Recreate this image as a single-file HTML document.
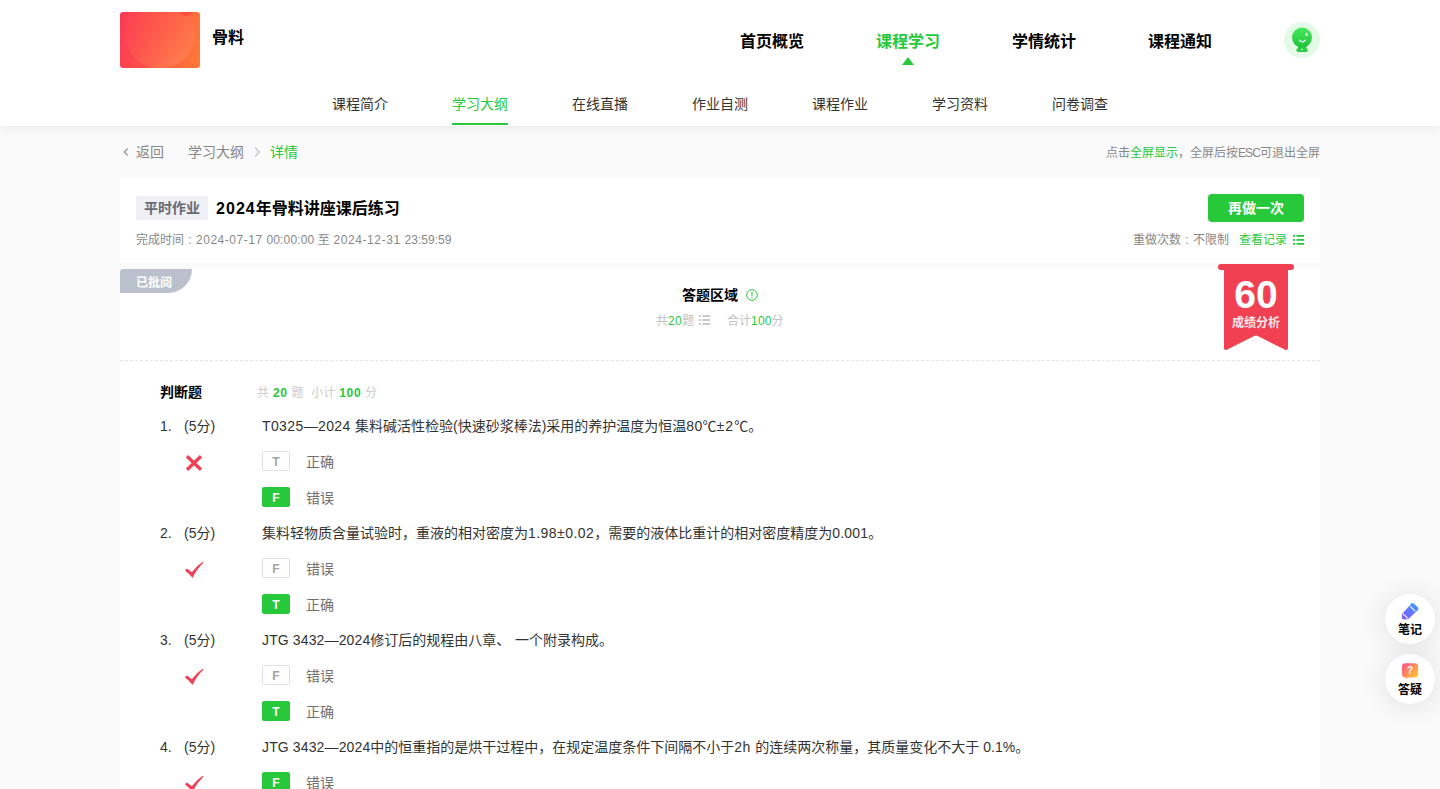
<!DOCTYPE html>
<html lang="zh-CN">
<head>
<meta charset="utf-8">
<title>2024年骨料讲座课后练习</title>
<style>
*{box-sizing:border-box;margin:0;padding:0}
html,body{width:1440px;height:789px;overflow:hidden}
body{background:#fafafa;font-family:"Liberation Sans","Noto Sans CJK SC",sans-serif;color:#333;font-size:14px;position:relative}
.abs{position:absolute;white-space:nowrap}
.l{display:inline-block;white-space:pre;vertical-align:baseline}
.g{color:#27c93b}
#hdr{position:absolute;left:0;top:0;width:1440px;height:126px;background:#fff;box-shadow:0 2px 10px rgba(0,0,0,.07)}
#logo{position:absolute;left:120px;top:12px;width:80px;height:56px;border-radius:3px;overflow:hidden;background:linear-gradient(100deg,#fb3a55 0%,#fd5746 50%,#ff7a35 100%)}
#cname{left:212px;top:26px;font-size:16px;font-weight:bold;color:#000;line-height:24px}
.tn{top:30px;font-size:16px;font-weight:bold;color:#000;line-height:24px;width:64px;text-align:center}
.tn.on{color:#27c93b}
#tri{position:absolute;left:902px;top:57px;width:0;height:0;border-left:6.5px solid transparent;border-right:6.5px solid transparent;border-bottom:8px solid #27c93b}
.sn{top:93px;font-size:14px;color:#333;line-height:22px;width:56px;text-align:center}
.sn.on{color:#27c93b}
#sul{position:absolute;left:452px;top:123px;width:56px;height:2px;background:#27c93b}
.bc{top:141px;font-size:14px;line-height:22px;color:#888}
.bc.g{color:#27c93b}
#c1{position:absolute;left:120px;top:178px;width:1200px;height:85px;background:#fff}
#c2{position:absolute;left:120px;top:269px;width:1200px;height:520px;background:#fff}
#tag{left:136px;top:196px;width:72px;height:24px;background:#eef0f5;border-radius:2px;font-size:14px;font-weight:bold;color:#666a73;text-align:center;line-height:24px}
#ttl{left:216px;top:197px;font-size:16px;font-weight:bold;color:#000;line-height:24px}
#tm{left:136px;top:231px;font-size:12px;color:#888;line-height:18px}
#btn{left:1208px;top:194px;width:96px;height:28px;background:#27c93b;border-radius:4px;color:#fff;font-size:14px;font-weight:bold;text-align:center;line-height:28px}
#redo{top:231px;font-size:12px;color:#888;line-height:18px;right:120px}
#py{position:absolute;left:120px;top:269px;width:72px;height:24px;background:#bbc1cc;border-radius:3px 0 24px 0;color:#fff;font-size:12px;font-weight:bold;line-height:24px;padding:2px 0 0 16px}
#az{left:682px;top:285px;font-size:14px;font-weight:bold;color:#000;line-height:20px}
.sm{font-size:12px;color:#c2c2c2;line-height:18px}
#dash{position:absolute;left:120px;top:360px;width:1200px;height:0;border-top:1px dashed #e4e4e4}
.q{font-size:14px;color:#333;line-height:22px}
.ob{position:absolute;left:262px;width:28px;height:20px;border:1px solid #dde1ea;border-radius:2px;font-size:12px;font-weight:bold;color:#a3a3a8;text-align:center;line-height:20px;background:#fff}
.ob.on{background:#27c93b;border-color:#27c93b;color:#fff}
.ot{left:306px;font-size:14px;color:#707070;line-height:22px}
.fl{position:absolute;left:1385px;width:50px;height:50px;border-radius:50%;background:#fff;box-shadow:0 2px 28px rgba(0,0,0,.11)}
.fl span{position:absolute;left:0;width:50px;text-align:center;top:27.500px;font-size:12px;font-weight:bold;color:#000;line-height:16px}
</style>
</head>
<body>

<div id="hdr">
  <div id="logo"><svg width="80" height="56" viewBox="0 0 80 56"><defs><linearGradient id="lg1" x1="0" y1="0" x2="1" y2="1"><stop offset="0" stop-color="#fc4a55" stop-opacity="0"/><stop offset=".45" stop-color="#fe6550" stop-opacity=".35"/><stop offset="1" stop-color="#ff8a52" stop-opacity=".95"/></linearGradient></defs><circle cx="40" cy="21" r="35.500" fill="url(#lg1)"/><circle cx="66" cy="-3" r="7" fill="#ff4d3a"/></svg></div>
  <div id="cname" class="abs">骨料</div>
  <div class="abs tn" style="left:740px">首页概览</div>
  <div class="abs tn on" style="left:876px">课程学习</div>
  <div class="abs tn" style="left:1012px">学情统计</div>
  <div class="abs tn" style="left:1148px">课程通知</div>
  <div id="tri"></div>
  <svg class="abs" style="left:1284px;top:22px" width="36" height="36" viewBox="0 0 36 36"><defs><linearGradient id="ag" x1="0" y1="0" x2="0" y2="1"><stop offset="0" stop-color="#46ea5e"/><stop offset="1" stop-color="#22c03a"/></linearGradient></defs><circle cx="18" cy="18" r="18" fill="#e3fbe6"/><rect x="12.400" y="26.200" width="11.400" height="3.900" rx="1.800" fill="#2ccc44"/><rect x="14" y="24" width="8.400" height="4" fill="#2ccc44"/><circle cx="18" cy="15.6" r="10" fill="url(#ag)"/><path d="M15.400 18.200 Q18.200 21.500 21.200 18.200" fill="none" stroke="#e8f4ff" stroke-width="1.3" stroke-linecap="round"/><path d="M22.6 10 L23.2 11.8 L24.6 12.4 L23.2 13 L22.6 14.8 L22 13 L20.8 12.4 L22 11.8 Z" fill="#e8ffee"/><circle cx="18" cy="27.4" r=".8" fill="#d8f8dd"/></svg>
  <div class="abs sn" style="left:332px">课程简介</div>
  <div class="abs sn on" style="left:452px">学习大纲</div>
  <div class="abs sn" style="left:572px">在线直播</div>
  <div class="abs sn" style="left:692px">作业自测</div>
  <div class="abs sn" style="left:812px">课程作业</div>
  <div class="abs sn" style="left:932px">学习资料</div>
  <div class="abs sn" style="left:1052px">问卷调查</div>
  <div id="sul"></div>
</div>


<svg class="abs" style="left:122px;top:147px" width="8" height="10" viewBox="0 0 8 10"><path d="M5.600 1.700 L2.400 5 L5.600 8.300" fill="none" stroke="#888" stroke-width="1.2"/></svg>
<div class="abs bc" style="left:136px">返回</div>
<div class="abs bc" style="left:188px">学习大纲</div>
<svg class="abs" style="left:252px;top:146px" width="10" height="12" viewBox="0 0 10 12"><path d="M3 1.5 L7.5 6 L3 10.500" fill="none" stroke="#c0c4cc" stroke-width="1.2"/></svg>
<div class="abs bc g" style="left:270px">详情</div>
<div class="abs" style="right:120px;top:144px;font-size:12px;line-height:18px;color:#888">点击<span class="g">全屏显示</span>，全屏后按<span class="l" style="width:22px;letter-spacing:-0.891px">ESC</span>可退出全屏</div>

<div id="c1"></div>
<div id="tag" class="abs">平时作业</div>
<div id="ttl" class="abs"><span class="l" style="width:39.8px;letter-spacing:1.052px">2024</span>年骨料讲座课后练习</div>
<div id="tm" class="abs">完成时间<span class="l" style="width:12px;text-align:center">:</span><span class="l" style="width:70.5px;letter-spacing:0.526px">2024-07-17 </span><span class="l" style="width:51.2px;letter-spacing:0.128px">00:00:00 </span>至<span class="l" style="width:74.8px;letter-spacing:0.562px"> 2024-12-31 </span><span class="l" style="width:47px;letter-spacing:0.036px">23:59:59</span></div>
<div id="btn" class="abs">再做一次</div>
<div id="redo" class="abs">重做次数<span class="l" style="width:12px;text-align:center">:</span>不限制<span class="g" style="margin-left:10px">查看记录</span><svg width="11" height="10" viewBox="0 0 11 10" style="margin-left:6px;margin-right:16px;vertical-align:-1px"><g fill="#27c93b"><rect x="0" y="0" width="2" height="1.8"/><rect x="3.5" y="0" width="7.5" height="1.8"/><rect x="0" y="4" width="2" height="1.8"/><rect x="3.5" y="4" width="7.5" height="1.8"/><rect x="0" y="8" width="2" height="1.8"/><rect x="3.5" y="8" width="7.5" height="1.8"/></g></svg></div>

<div id="c2"></div>
<div id="py">已批阅</div>
<div id="az" class="abs">答题区域</div>
<svg class="abs" style="left:746px;top:289px" width="12" height="12" viewBox="0 0 12 12"><circle cx="6" cy="6" r="5.300" fill="none" stroke="#27c93b" stroke-width="1"/><rect x="5.5" y="3" width="1" height="4" fill="#27c93b"/><rect x="5.5" y="8" width="1" height="1" fill="#27c93b"/></svg>
<div class="abs sm" style="left:656px;top:312px">共<span class="g"><span class="l" style="width:14.2px;letter-spacing:0.426px">20</span></span>题</div>
<svg class="abs" style="left:698.5px;top:315px" width="11" height="10" viewBox="0 0 11 10"><g fill="#cacaca"><rect x="0" y="0" width="2" height="2"/><rect x="3.5" y="0" width="7.5" height="2"/><rect x="0" y="4" width="2" height="2"/><rect x="3.5" y="4" width="7.5" height="2"/><rect x="0" y="8" width="2" height="2"/><rect x="3.5" y="8" width="7.5" height="2"/></g></svg>
<div class="abs sm" style="left:727px;top:312px">合计<span class="g"><span class="l" style="width:20.6px;letter-spacing:0.193px">100</span></span>分</div>
<div id="dash"></div>

<svg class="abs" style="left:1216px;top:262px" width="80" height="92" viewBox="0 0 80 92"><path d="M5 2 H75 A3 3 0 0 1 75 8 H72 V86 A2 2 0 0 1 69.2 87.800 L41.800 74 A4 4 0 0 0 38.200 74 L10.800 87.800 A2 2 0 0 1 8 86 V8 H5 A3 3 0 0 1 5 2 Z" fill="#f04051"/><text x="40" y="46" text-anchor="middle" font-family="Liberation Sans, sans-serif" font-weight="bold" font-size="39" fill="#fff" textLength="43.5" lengthAdjust="spacingAndGlyphs">60</text><text x="40" y="64.500" text-anchor="middle" font-family="Liberation Sans, Noto Sans CJK SC, sans-serif" font-weight="bold" font-size="12" fill="#ffe9ea">成绩分析</text></svg>

<div class="abs" style="left:160px;top:382px;font-size:14px;font-weight:bold;color:#000;line-height:20px">判断题</div>
<div class="abs sm" style="left:257px;top:384px;color:#ccc;word-spacing:.6px">共 <b class="g"><span class="l" style="width:14.6px;letter-spacing:0.626px">20</span></b> 题&nbsp; 小计 <b class="g"><span class="l" style="width:21.9px;letter-spacing:0.626px">100</span></b> 分</div>

<div class="abs q" style="left:160px;top:415px">1.</div>
<div class="abs q" style="left:184px;top:415px">(5分)</div>
<div class="abs q" style="left:262px;top:415px"><span class="l" style="width:93px;letter-spacing:0.388px">T0325—2024 </span>集料碱活性检验(快速砂浆棒法)采用的养护温度为恒温<span class="l" style="width:16.2px;letter-spacing:0.314px">80</span>℃<span class="l" style="width:17.7px;letter-spacing:1.115px">±2</span>℃。</div>
<svg class="abs" style="left:185px;top:454px" width="18" height="18" viewBox="0 0 18 18"><path d="M2 2.2 L16 15.800 M16 2.200 L2 15.800" stroke="#f04056" stroke-width="3.3" fill="none"/></svg>
<div class="ob" style="top:451px">T</div>
<div class="abs ot" style="top:451px">正确</div>
<div class="ob on" style="top:487px">F</div>
<div class="abs ot" style="top:487px">错误</div>
<div class="abs q" style="left:160px;top:522px">2.</div>
<div class="abs q" style="left:184px;top:522px">(5分)</div>
<div class="abs q" style="left:262px;top:522px">集料轻物质含量试验时，重液的相对密度为<span class="l" style="width:66.3px;letter-spacing:0.458px">1.98±0.02</span>，需要的液体比重计的相对密度精度为<span class="l" style="width:36px;letter-spacing:0.193px">0.001</span>。</div>
<svg class="abs" style="left:185px;top:561px" width="19" height="18" viewBox="0 0 19 18"><path d="M0.3 9.2 Q0.8 7.7 2.3 7.800 L6.800 11.200 Q12 4.500 17.800 0.800 L18.300 1.800 Q11.500 8.500 7.600 16.900 Q4.500 13 0.300 9.800 Z" fill="#f04056"/></svg>
<div class="ob" style="top:558px">F</div>
<div class="abs ot" style="top:558px">错误</div>
<div class="ob on" style="top:594px">T</div>
<div class="abs ot" style="top:594px">正确</div>
<div class="abs q" style="left:160px;top:629px">3.</div>
<div class="abs q" style="left:184px;top:629px">(5分)</div>
<div class="abs q" style="left:262px;top:629px"><span class="l" style="width:108.3px;letter-spacing:0.129px">JTG 3432—2024</span>修订后的规程由八章、<span class="l" style="width:4.7px;letter-spacing:0.810px"> </span>一个附录构成。</div>
<svg class="abs" style="left:185px;top:668px" width="19" height="18" viewBox="0 0 19 18"><path d="M0.3 9.2 Q0.8 7.7 2.3 7.800 L6.800 11.200 Q12 4.500 17.800 0.800 L18.300 1.800 Q11.500 8.500 7.600 16.900 Q4.500 13 0.300 9.800 Z" fill="#f04056"/></svg>
<div class="ob" style="top:665px">F</div>
<div class="abs ot" style="top:665px">错误</div>
<div class="ob on" style="top:701px">T</div>
<div class="abs ot" style="top:701px">正确</div>
<div class="abs q" style="left:160px;top:736px">4.</div>
<div class="abs q" style="left:184px;top:736px">(5分)</div>
<div class="abs q" style="left:262px;top:736px"><span class="l" style="width:108.3px;letter-spacing:0.129px">JTG 3432—2024</span>中的恒重指的是烘干过程中，在规定温度条件下间隔不小于<span class="l" style="width:21px;letter-spacing:0.513px">2h </span>的连续两次称量，其质量变化不大于<span class="l" style="width:36px;letter-spacing:0.040px"> 0.1%</span>。</div>
<svg class="abs" style="left:185px;top:775px" width="19" height="18" viewBox="0 0 19 18"><path d="M0.3 9.2 Q0.8 7.7 2.3 7.800 L6.800 11.200 Q12 4.500 17.800 0.800 L18.300 1.800 Q11.500 8.500 7.600 16.900 Q4.500 13 0.300 9.800 Z" fill="#f04056"/></svg>
<div class="ob on" style="top:772px">F</div>
<div class="abs ot" style="top:772px">错误</div>
<div class="ob" style="top:808px">T</div>
<div class="abs ot" style="top:808px">正确</div>

<div class="fl" style="top:594px"><svg style="position:absolute;left:17px;top:8.500px" width="17" height="17" viewBox="0 0 17 17"><defs><linearGradient id="pg" x1="0" y1="1" x2="1" y2="0"><stop offset="0" stop-color="#8457ff"/><stop offset="1" stop-color="#3c9dff"/></linearGradient></defs><path d="M1 16.200 Q0 16.200 0 15.200 V10.900 L9 1 A2.200 2.200 0 0 1 12.200 0.900 L15.600 4.100 A2.200 2.200 0 0 1 15.700 7.200 L6 16.200 Z" fill="url(#pg)"/><path d="M0.800 10.600 L5.800 15.400 M8.200 3.300 L13.300 8.300" stroke="#fff" stroke-width="1.15"/></svg><span>笔记</span></div>
<div class="fl" style="top:654px"><svg style="position:absolute;left:17px;top:8.500px" width="17" height="17" viewBox="0 0 17 17"><defs><linearGradient id="qg" x1="0" y1="0" x2="1" y2="1"><stop offset="0" stop-color="#ff4a90"/><stop offset="1" stop-color="#ffd81a"/></linearGradient></defs><path d="M3.500 0.200 H12.600 A3.500 3.500 0 0 1 16.100 3.700 V11 A3.500 3.500 0 0 1 12.600 14.500 H6 L3.200 16.300 L3.800 14.500 H3.500 A3.500 3.500 0 0 1 0 11 V3.700 A3.500 3.500 0 0 1 3.500 0.200 Z" fill="url(#qg)"/><text x="8" y="11.300" text-anchor="middle" font-family="Liberation Sans, sans-serif" font-weight="bold" font-size="10.500" fill="#fff">?</text></svg><span>答疑</span></div>

</body>
</html>
